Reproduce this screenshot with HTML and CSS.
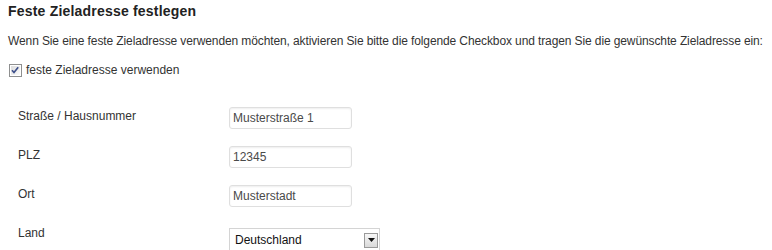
FILE: index.html
```html
<!DOCTYPE html>
<html lang="de">
<head>
    <meta charset="UTF-8">
    <title>Feste Zieladresse festlegen</title>
    <link rel="stylesheet" href="styles.css">
</head>
<body>
    <div class="wrap">
        <h3 class="titel">Feste Zieladresse festlegen</h3>
        <p class="hinweis">Wenn Sie eine feste Zieladresse verwenden möchten, aktivieren Sie bitte die folgende Checkbox und tragen Sie die gewünschte Zieladresse ein:</p>
        <label class="check">
            <span class="kasten">
                <svg width="13" height="13" viewBox="0 0 13 13">
                    <defs>
                        <linearGradient id="kastenVerlauf" x1="0" y1="0" x2="1" y2="1">
                            <stop offset="0" stop-color="#dcdcdc"/>
                            <stop offset="1" stop-color="#fbfbfb"/>
                        </linearGradient>
                    </defs>
                    <rect x="0.5" y="0.5" width="12" height="12" fill="#fff" stroke="#8e8f8f"/>
                    <rect x="2" y="2" width="9" height="9" fill="url(#kastenVerlauf)"/>
                    <path d="M3 6.2l2 2.3 4.2-5.2" fill="none" stroke="#3d4f8a" stroke-width="1.7"/>
                </svg>
            </span>
            feste Zieladresse verwenden
        </label>

        <div class="formular">
            <div class="zeile">
                <span class="feld-name">Straße / Hausnummer</span>
                <input type="text" class="eingabe" value="Musterstraße 1">
            </div>
            <div class="zeile">
                <span class="feld-name">PLZ</span>
                <input type="text" class="eingabe" value="12345">
            </div>
            <div class="zeile">
                <span class="feld-name">Ort</span>
                <input type="text" class="eingabe" value="Musterstadt">
            </div>
            <div class="zeile">
                <span class="feld-name">Land</span>
                <div class="auswahl">
                    <span>Deutschland</span>
                    <span class="pfeil">
                        <svg width="7" height="4" viewBox="0 0 7 4"><path d="M0 0h7L3.5 4z" fill="#111"/></svg>
                    </span>
                </div>
            </div>
        </div>
    </div>
</body>
</html>
```

FILE: styles.css
```css
body {
    margin: 0;
    background-color: #fff;
    font-family: Arial, "Liberation Sans", sans-serif;
    font-size: 12px;
    color: #333;
}

.wrap {
    padding: 0 8px;
}

.titel {
    margin: 2px 0 0 0;
    font-size: 14px;
    font-weight: bold;
    color: #222;
    line-height: 18px;
    letter-spacing: 0.2px;
}

.hinweis {
    margin: 13px 0 0 0;
    line-height: 16px;
    white-space: nowrap;
    letter-spacing: -0.11px;
}

.check {
    display: flex;
    align-items: center;
    margin-top: 13px;
    line-height: 16px;
}

.kasten {
    display: flex;
    margin: 0 4px 0 1px;
}

.formular {
    margin-top: 29px;
    padding-left: 10px;
}

.zeile {
    display: flex;
    align-items: flex-start;
    height: 39px;
}

.feld-name {
    width: 211px;
    padding-top: 1px;
    line-height: 16px;
}

.eingabe {
    width: 123px;
    height: 22px;
    box-sizing: border-box;
    margin: 0;
    padding: 0 3px;
    border: 1px solid #dfdfdf;
    border-radius: 3px;
    box-shadow: inset 0 1px 2px rgba(0, 0, 0, 0.07);
    font-family: Arial, "Liberation Sans", sans-serif;
    font-size: 12px;
    color: #4a4a4a;
}

.auswahl {
    display: flex;
    align-items: center;
    justify-content: space-between;
    width: 151px;
    height: 24px;
    box-sizing: border-box;
    margin-top: 4px;
    padding: 0 1px 0 5px;
    border: 1px solid #d4d4d4;
    font-size: 12px;
    color: #111;
}

.pfeil {
    display: flex;
    align-items: center;
    justify-content: center;
    width: 14px;
    height: 15px;
    box-sizing: border-box;
    border: 1px solid #9a9a9a;
    background: linear-gradient(#f7f7f7, #d9d9d9);
}
```
